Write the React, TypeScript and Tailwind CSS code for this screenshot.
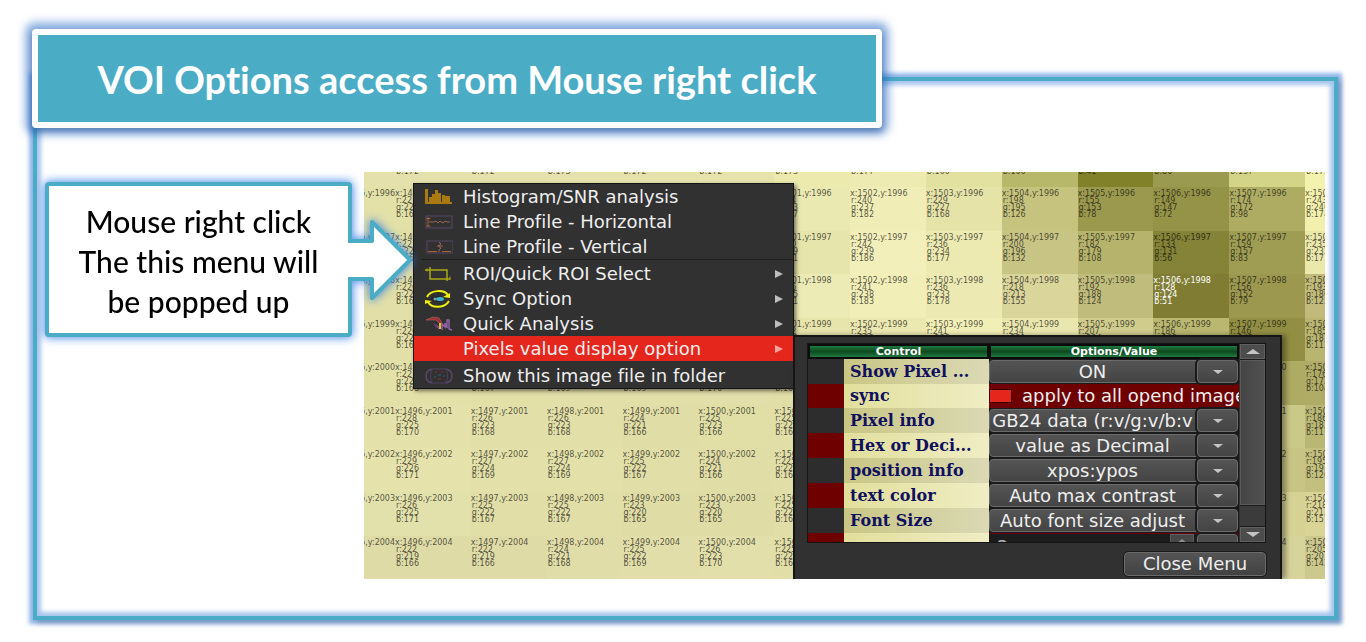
import React, { useState } from 'react';
import { clsx } from 'clsx';

type Rgb = [number, number, number];

type PixelRow = {
  y: number;
  pixels: Rgb[];
};

const FIRST_X = 1496;

// One entry per image row, pixels go from x = 1496 to x = 1508
const pixelRows: PixelRow[] = [
  {
    y: 1995,
    pixels: [
      [228, 225, 172], [228, 225, 172], [229, 226, 173], [229, 226, 172], [230, 228, 172], [236, 234, 173], [237, 235, 177],
      [226, 225, 160], [183, 184, 106], [128, 129, 41], [154, 154, 80], [212, 212, 137], [244, 242, 175],
    ],
  },
  {
    y: 1996,
    pixels: [
      [227, 224, 168], [226, 223, 168], [226, 223, 168], [226, 223, 169], [228, 225, 170], [234, 233, 177], [240, 237, 182],
      [229, 227, 168], [198, 195, 126], [155, 153, 78], [149, 147, 72], [174, 172, 98], [243, 240, 174],
    ],
  },
  {
    y: 1997,
    pixels: [
      [227, 224, 167], [226, 223, 168], [226, 223, 168], [226, 223, 169], [228, 225, 170], [230, 229, 171], [242, 239, 186],
      [236, 234, 177], [200, 196, 132], [182, 179, 108], [133, 131, 56], [159, 157, 83], [235, 232, 171],
    ],
  },
  {
    y: 1998,
    pixels: [
      [226, 223, 168], [226, 223, 168], [226, 223, 168], [226, 223, 169], [228, 225, 170], [236, 235, 181], [241, 238, 183],
      [236, 233, 178], [218, 213, 155], [192, 188, 124], [128, 124, 51], [156, 152, 79], [193, 186, 123],
    ],
  },
  {
    y: 1999,
    pixels: [
      [226, 223, 168], [226, 223, 168], [226, 223, 168], [226, 223, 169], [228, 225, 170], [232, 229, 172], [235, 232, 176],
      [241, 238, 182], [234, 231, 174], [207, 204, 140], [186, 183, 112], [146, 143, 68], [185, 181, 112],
    ],
  },
  {
    y: 2000,
    pixels: [
      [227, 224, 168], [226, 223, 167], [226, 223, 169], [226, 223, 169], [226, 223, 170], [225, 222, 167], [226, 223, 168],
      [225, 222, 168], [222, 219, 160], [210, 207, 140], [196, 193, 120], [174, 171, 100], [176, 172, 104],
    ],
  },
  {
    y: 2001,
    pixels: [
      [228, 225, 170], [226, 223, 168], [226, 223, 168], [224, 221, 166], [225, 223, 166], [225, 222, 167], [226, 223, 168],
      [225, 222, 168], [222, 219, 160], [215, 212, 150], [209, 206, 140], [203, 201, 135], [186, 183, 117],
    ],
  },
  {
    y: 2002,
    pixels: [
      [229, 226, 171], [227, 224, 169], [227, 224, 169], [225, 222, 167], [224, 221, 166], [225, 222, 167], [226, 223, 168],
      [225, 222, 168], [222, 219, 160], [215, 212, 150], [209, 206, 140], [200, 197, 132], [195, 191, 126],
    ],
  },
  {
    y: 2003,
    pixels: [
      [226, 225, 171], [225, 222, 167], [225, 222, 167], [223, 220, 165], [223, 220, 165], [225, 222, 167], [226, 223, 168],
      [225, 222, 168], [222, 219, 160], [215, 212, 150], [212, 209, 146], [213, 210, 148], [218, 213, 151],
    ],
  },
  {
    y: 2004,
    pixels: [
      [222, 219, 166], [222, 219, 166], [224, 221, 168], [225, 222, 169], [226, 223, 170], [225, 222, 167], [226, 223, 168],
      [225, 222, 168], [222, 219, 160], [215, 212, 150], [214, 211, 152], [215, 212, 155], [205, 201, 142],
    ],
  },
];

const optionRows = [
  { label: 'Show Pixel ...', id: 'show-pixel', value: 'ON' },
  { label: 'sync', id: 'sync', value: 'apply to all opend image' },
  { label: 'Pixel info', id: 'pixel-info', value: 'GB24 data (r:v/g:v/b:v' },
  { label: 'Hex or Deci...', id: 'hex-or-decimal', value: 'value as Decimal' },
  { label: 'position info', id: 'position-info', value: 'xpos:ypos' },
  { label: 'text color', id: 'text-color', value: 'Auto max contrast' },
  { label: 'Font Size', id: 'font-size', value: 'Auto font size adjust' },
];

function HistogramIcon() {
  return (
    <svg viewBox="0 0 28 18" className="h-[18px] w-7" fill="#a87a10">
      <path d="M0 1h3v13h24v2H0z" />
      <path d="M4 9h3v5H4zM7 6h3v8H7zM10 2h3v12h-3zM13 5h3v9h-3zM17 7h3v7h-3zM20 8h5v6h-5z" />
    </svg>
  );
}

function LineHorizontalIcon() {
  return (
    <svg viewBox="0 0 28 18" className="h-[18px] w-7" fill="none">
      <rect x="1" y="3" width="26" height="12" stroke="#594668" />
      <path d="M3 4v10M1.5 5.5h4M1.5 13h4" stroke="#a8622d" />
      <path d="M4 9h5l2-1 2 2 2-2 3 2 2-2 2 1h3" stroke="#9a6558" />
    </svg>
  );
}

function LineVerticalIcon() {
  return (
    <svg viewBox="0 0 28 18" className="h-[18px] w-7" fill="none">
      <rect x="2" y="3" width="26" height="12" stroke="#594668" />
      <path d="M3 13.5h9M17 13.5h9" stroke="#a8622d" />
      <path d="M14 4l2 2-3 2 3 2-2 2v2M12 8h6" stroke="#9a6558" />
    </svg>
  );
}

function CropIcon() {
  return (
    <svg viewBox="0 0 28 18" className="h-[18px] w-7" fill="none" stroke="#a9a914" strokeWidth="1.5">
      <path d="M5 2v12h20M0 5h22v11" />
      <path d="M2 3.5v3M25 11.500v3.500" strokeWidth="1" />
    </svg>
  );
}

function SyncIcon() {
  return (
    <svg viewBox="0 0 28 18" className="h-[18px] w-7" fill="none">
      <path d="M2 7C5 0 19-1 23 5M24 11C20 18 7 19 3 12" stroke="#f1ef0c" strokeWidth="2" />
      <path d="M25 3v5l-7-1zM0 14v-4l7 1z" fill="#f1ef0c" />
      <path d="M5 9c4-4 11-4 15 0-4 4-11 4-15 0z" fill="#20262a" />
      <ellipse cx="15" cy="9" rx="4" ry="2" fill="#3fb4d0" />
      <circle cx="10" cy="9" r="1.500" fill="#8b9da4" />
    </svg>
  );
}

function AnalysisIcon() {
  return (
    <svg viewBox="0 0 28 18" className="h-[18px] w-7">
      <path d="M1 5l7-3 6 1 4 7-3-1-4-4z" fill="#9d3030" stroke="#c07070" strokeWidth=".5" />
      <path d="M8 8l6 3v4l-3-3z" fill="#753b8c" />
      <path d="M14 8h2v6h-2z" fill="#e0c51b" />
      <path d="M17 15V9l3 3V8l2 5V5h2v9l3 1" fill="none" stroke="#9062a5" strokeWidth="1.500" />
    </svg>
  );
}

function FolderIcon() {
  return (
    <svg viewBox="0 0 28 18" className="h-[18px] w-7" fill="none">
      <path d="M7 2c-4 1-6 3-6 7s2 6 6 7M21 2c4 1 6 3 6 7s-2 6-6 7" stroke="#594668" strokeWidth="1.500" />
      <path d="M7 2h14M7 16h14M7 3c-2 3-2 9 0 12M21 3c2 3 2 9 0 12" stroke="#504060" />
      <path d="M10 5h2M16 5h2M13 12h3" stroke="#8b2b35" />
      <path d="M13 8h3M18 9h2M9 10h2" stroke="#27617a" />
    </svg>
  );
}

function MenuItem({
  icon,
  label,
  hasSubmenu,
  active,
}: {
  icon?: React.ReactNode;
  label: string;
  hasSubmenu?: boolean;
  active?: boolean;
}) {
  return (
    <button
      type="button"
      role="menuitem"
      className={clsx(
        'flex h-[25px] w-full items-center pl-[11px] pr-[10px] text-left text-[18px] leading-none whitespace-nowrap text-[#eeeeee]',
        active && 'bg-[#e5261c]',
      )}
    >
      <span className="w-[38px] shrink-0">{icon}</span>
      <span className="flex-1">{label}</span>
      {hasSubmenu && (
        <svg viewBox="0 0 8 10" className={clsx('h-[10px] w-2', active ? 'text-[#f5a5a0]' : 'text-[#bdbdbd]')}>
          <path d="M0 1v8l8-4z" fill="currentColor" />
        </svg>
      )}
    </button>
  );
}

function PixelCell({ x, y, rgb }: { x: number; y: number; rgb: Rgb }) {
  const [r, g, b] = rgb;
  const isDark = r <= 128 && y !== 1995;

  return (
    <div
      className={clsx(
        'h-full min-h-[43px] overflow-hidden pt-[3px] whitespace-nowrap',
        isDark ? 'text-white' : 'text-black/65',
      )}
      style={{ backgroundColor: `rgb(${r}, ${g}, ${b})` }}
    >
      <div>x:{x},y:{y}</div>
      <div className="pl-px">r:{r}</div>
      <div className="pl-px">g:{g}</div>
      <div className="pl-px">b:{b}</div>
    </div>
  );
}

function PixelMap() {
  return (
    <div className="flex h-full flex-col text-[8px] leading-[7px]">
      {pixelRows.map((row) => (
        <div
          key={row.y}
          className={clsx(
            'grid grid-cols-[31px_repeat(12,minmax(0,1fr))_20px] overflow-hidden',
            row.y === 1995 ? 'h-[15px] shrink-0 content-end' : 'min-h-0 flex-1',
          )}
        >
          {/* the left column is cut, only the end of its position text is seen */}
          <div
            className="flex justify-end overflow-hidden pt-[3px] text-black/65"
            style={{ backgroundColor: `rgb(${row.pixels[0].join(', ')})` }}
          >
            x:{FIRST_X - 1},y:{row.y}
          </div>
          {row.pixels.map((rgb, i) => (
            <PixelCell key={i} x={FIRST_X + i} y={row.y} rgb={rgb} />
          ))}
        </div>
      ))}
    </div>
  );
}

function DropDown({ id, value }: { id: string; value: string }) {
  return (
    <div className="grid h-full grid-cols-[minmax(0,1fr)_42px]">
      <select
        id={id}
        className="col-span-2 col-start-1 row-start-1 my-px mr-px min-h-0 appearance-none rounded-sm border border-[#6b6b6b] bg-linear-to-b from-[#545454] to-[#444444] pr-[42px] text-center text-[18px] leading-[21px] text-[#eeeeee] [text-align-last:center]"
      >
        <option>{value}</option>
      </select>
      <span className="pointer-events-none col-start-2 row-start-1 my-px mr-px flex items-center justify-center rounded-sm border border-[#6b6b6b] bg-linear-to-b from-[#545454] to-[#444444] outline-2 -outline-offset-0 outline-[#1a1a1a]">
        <svg viewBox="0 0 10 4" className="h-1 w-[10px]">
          <path d="M0 0h10L5 4z" fill="#c4c4c4" />
        </svg>
      </span>
    </div>
  );
}

function OptionsPanel() {
  const [sync, setSync] = useState(true);

  return (
    <div className="absolute top-[163px] bottom-0 left-[429px] w-[489px] border-t-2 border-r-2 border-l-2 border-[#151515] bg-[#313131] pt-[6px] pr-[14px] pl-3 shadow-[4px_0_5px_rgba(0,0,0,0.35)]">
      <div className="flex h-[200px] overflow-hidden border border-[#151515]">
        <div className="min-w-0 flex-1 overflow-hidden bg-[#151515]">
          <table className="w-full table-fixed border-separate border-spacing-0">
            <colgroup>
              <col className="w-[36px]" />
              <col className="w-[145px]" />
              <col />
            </colgroup>
            <thead>
              <tr className="h-[15px] text-[11px] leading-[11px] text-white">
                <th scope="col" colSpan={2} className="border-2 border-[#0b0b0b] bg-linear-to-b from-[#1d7a41] via-[#0f4a1f] to-[#1d7a41] p-0">
                  Control
                </th>
                <th scope="col" className="border-2 border-[#0b0b0b] bg-linear-to-b from-[#1d7a41] via-[#0f4a1f] to-[#1d7a41] p-0">
                  Options/Value
                </th>
              </tr>
            </thead>
            <tbody>
              {optionRows.map((row, i) => (
                <tr key={row.id} className={i < 3 ? 'h-6' : 'h-[25px]'}>
                  <td className={clsx('p-0', i % 2 ? 'bg-[#6e0000]' : 'bg-[#2d2d2d]')} />
                  <th
                    scope="row"
                    className={clsx(
                      'bg-linear-to-r p-0 pl-[6px] text-left font-["DejaVu_Serif",serif] text-base leading-none font-bold whitespace-nowrap text-[#10105e]',
                      i % 2 ? 'from-[#e2df9c] to-[#efedc4]' : 'from-[#c9c684] to-[#dbd9b4]',
                    )}
                  >
                    <label htmlFor={row.id}>{row.label}</label>
                  </th>
                  <td className={clsx('h-px p-0', i === 1 ? 'bg-[#6e0000]' : 'bg-[#1a1a1a]')}>
                    {row.id === 'sync' ? (
                      <div className="flex items-center gap-[10px] overflow-hidden text-[18px] leading-[22px] whitespace-nowrap text-[#eeeeee]">
                        <input
                          id={row.id}
                          type="checkbox"
                          checked={sync}
                          onChange={(e) => setSync(e.target.checked)}
                          className="h-[14px] w-[23px] shrink-0 appearance-none border border-[#3a0000] bg-[#e5261c]"
                        />
                        {row.value}
                      </div>
                    ) : (
                      <DropDown id={row.id} value={row.value} />
                    )}
                  </td>
                </tr>
              ))}
              <tr className="h-[25px]">
                <td className="bg-[#6e0000] p-0" />
                <td className="bg-linear-to-r from-[#e2df9c] to-[#efedc4] p-0" />
                <td className="border-t border-[#6e0000] bg-[#1c1c1c] p-0">
                  <div className="flex h-6 gap-[3px]">
                    <input
                      type="text"
                      aria-label="Font size value"
                      defaultValue="2"
                      className="min-w-0 flex-1 pl-2 text-[18px] leading-none text-[#b5b5b5]"
                    />
                    <button type="button" aria-label="Increase" className="flex w-6 justify-center border border-[#5e5e5e] bg-[#484848] pt-1">
                      <svg viewBox="0 0 12 5" className="h-[5px] w-3">
                        <path d="M0 5h12L6 0z" fill="#8e8e8e" />
                      </svg>
                    </button>
                    <span className="mr-px w-[41px] rounded-sm border border-[#6b6b6b] bg-[#4c4c4c]" />
                  </div>
                </td>
              </tr>
            </tbody>
          </table>
        </div>

        <div className="ml-px flex w-[25px] flex-col gap-px bg-[#1c1c1c]">
          <button type="button" aria-label="Scroll up" className="flex h-[15px] items-center justify-center border border-[#606060] bg-[#4c4c4c]">
            <svg viewBox="0 0 14 5" className="h-[5px] w-[14px]">
              <path d="M0 5h14L7 0z" fill="#c4c4c4" />
            </svg>
          </button>
          <div className="flex-1 border border-[#5a5a5a] bg-linear-to-r from-[#454545] to-[#505050]" />
          <div className="h-5 bg-[#3b3b3b]" />
          <button type="button" aria-label="Scroll down" className="flex h-[15px] items-center justify-center border border-[#606060] bg-[#4c4c4c]">
            <svg viewBox="0 0 14 5" className="h-[5px] w-[14px]">
              <path d="M0 0h14L7 5z" fill="#c4c4c4" />
            </svg>
          </button>
        </div>
      </div>

      <div className="mt-[9px] flex justify-end">
        <button
          type="button"
          className="h-6 w-[142px] rounded-sm border border-[#6b6b6b] bg-linear-to-b from-[#545454] to-[#424242] text-[18px] leading-none text-[#eeeeee] outline-1 outline-[#1a1a1a]"
        >
          Close Menu
        </button>
      </div>
    </div>
  );
}

function ContextMenu() {
  return (
    <div
      role="menu"
      className="absolute top-[11px] left-[49px] w-[381px] border border-[#151515] bg-[#313131] shadow-[2px_2px_4px_rgba(0,0,0,0.5)]"
    >
      <MenuItem icon={<HistogramIcon />} label="Histogram/SNR analysis" />
      <MenuItem icon={<LineHorizontalIcon />} label="Line Profile - Horizontal" />
      <MenuItem icon={<LineVerticalIcon />} label="Line Profile - Vertical" />
      <div className="ml-2 h-[2px] border-t border-[#1e1e1e]" />
      <MenuItem icon={<CropIcon />} label="ROI/Quick ROI Select" hasSubmenu />
      <MenuItem icon={<SyncIcon />} label="Sync Option" hasSubmenu />
      <MenuItem icon={<AnalysisIcon />} label="Quick Analysis" hasSubmenu />
      <MenuItem label="Pixels value display option" hasSubmenu active />
      <div className="h-[2px]" />
      <MenuItem icon={<FolderIcon />} label="Show this image file in folder" />
    </div>
  );
}

function Callout() {
  return (
    <div className="relative z-10 mt-[10px] w-[307px] shrink-0 self-start [filter:drop-shadow(0_0_4px_rgba(50,125,230,0.6))_drop-shadow(0_0_4px_rgba(50,125,230,0.5))]">
      <div className="rounded-sm border-4 border-[#4bacc6] bg-white px-4 pt-[15px] pb-3 text-center text-[30px] leading-10 font-medium text-black">
        <p>Mouse right click</p>
        <p>The this menu will</p>
        <p>be popped up</p>
      </div>
      {/* arrow that points at the menu */}
      <svg viewBox="0 0 68 88" className="absolute top-[34px] left-full -ml-1 h-[88px] w-[68px]">
        <path
          d="M0 25h24V6l38 38-38 38V63H0"
          fill="#fff"
          stroke="#4bacc6"
          strokeWidth="4"
          strokeLinejoin="round"
        />
      </svg>
    </div>
  );
}

export default function App() {
  return (
    <div className="min-h-screen bg-white pt-[29px] pr-7 pb-[22px] pl-8 font-['Lato',sans-serif] [font-variant-ligatures:none]">
      <header className="relative z-10 flex h-[99px] w-[850px] max-w-full items-center justify-center rounded-sm border-[6px] border-white bg-[#4bacc6] shadow-[0_0_8px_7px_rgba(50,115,200,0.55),0_3px_6px_rgba(40,60,100,0.6)]">
        <h1 className="text-[38px] leading-none font-bold whitespace-nowrap text-white">
          VOI Options access from Mouse right click
        </h1>
      </header>

      <main className="-mt-[51px] ml-px flex gap-3 border-4 border-[#4bacc6] pt-[91px] pr-[9px] pb-[37px] pl-2 shadow-[0_0_4px_4px_rgba(60,125,215,0.55),3px_3px_5px_rgba(0,0,0,0.3),inset_0_0_4px_4px_rgba(60,125,215,0.45)]">
        <Callout />
        <div className="relative h-[407px] min-w-0 flex-1 overflow-hidden font-['DejaVu_Sans',sans-serif]">
          <PixelMap />
          <ContextMenu />
          <OptionsPanel />
        </div>
      </main>
    </div>
  );
}
